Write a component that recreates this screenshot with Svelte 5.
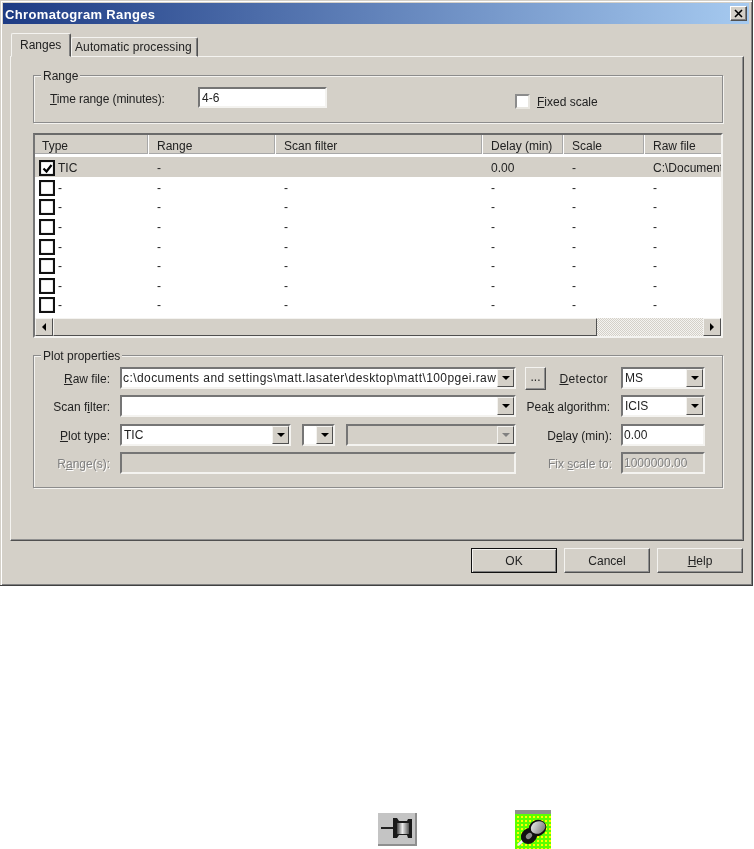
<script>
  const columns = ["Type", "Range", "Scan filter", "Delay (min)", "Scale", "Raw file"];
  const rows = [
    { checked: true, cells: ["TIC", "-", "", "0.00", "-", "C:\\Documents and Settings"] },
    ...Array.from({ length: 7 }, () => ({ checked: false, cells: ["-", "-", "-", "-", "-", "-"] })),
  ];
</script>

{#snippet combo(text, cls = "", disabled = false)}
  <div class="combo {cls}" class:disabled>
    <span class="combo_text">{text}</span>
    <span class="drop"><i></i></span>
  </div>
{/snippet}

<div class="dialog">
  <div class="titlebar">
    <span>Chromatogram Ranges</span>
    <button class="close" aria-label="Close">
      <svg width="9" height="9" viewBox="0 0 9 9"><path d="M1 1l7 7M8 1L1 8" stroke="#000" stroke-width="1.6" /></svg>
    </button>
  </div>

  <div class="tabs">
    <div class="tab active">Ranges</div>
    <div class="tab">Automatic processing</div>
  </div>

  <div class="page">
    <div class="group range_group">
      <span class="legend">Range</span>
      <label class="time_label" for="time"><u>T</u>ime range (minutes):</label>
      <input id="time" class="field time_input" value="4-6" />
      <div class="fixed">
        <span class="small_check"></span>
        <span><u>F</u>ixed scale</span>
      </div>
    </div>

    <div class="table">
      <div class="row head">
        {#each columns as col}
          <div class="th">{col}</div>
        {/each}
      </div>
      <div class="body">
        {#each rows as row}
          <div class="row" class:selected={row.checked}>
            {#each row.cells as cell, i}
              <div class="td">
                {#if i === 0}
                  <span class="check">
                    {#if row.checked}
                      <svg width="11" height="11" viewBox="0 0 11 11"><path d="M1.500 5.500l3 3 5-6.500" fill="none" stroke="#000" stroke-width="2.2" /></svg>
                    {/if}
                  </span>
                {/if}
                {cell}
              </div>
            {/each}
          </div>
        {/each}
      </div>
      <div class="scrollbar">
        <span class="sb_btn"><i class="left"></i></span>
        <span class="thumb"></span>
        <span class="hatch"></span>
        <span class="sb_btn"><i class="right"></i></span>
      </div>
    </div>

    <div class="group plot_group">
      <span class="legend">Plot properties</span>
      <div class="plot_left">
        <span class="lbl"><u>R</u>aw file:</span>
        {@render combo("c:\\documents and settings\\matt.lasater\\desktop\\matt\\100pgei.raw", "path")}
        <span class="lbl">Scan f<u>i</u>lter:</span>
        {@render combo("")}
        <span class="lbl"><u>P</u>lot type:</span>
        <div class="type_row">
          {@render combo("TIC", "type_main")}
          {@render combo("", "type_small")}
          {@render combo("", "type_third", true)}
        </div>
        <span class="lbl off">R<u>a</u>nge(s):</span>
        <div class="field blank"></div>
      </div>
      <div class="plot_right">
        <div class="first_cell">
          <button class="dots">...</button>
          <span class="lbl detector"><u>D</u>etector</span>
        </div>
        {@render combo("MS")}
        <span class="lbl peak">Pea<u>k</u> algorithm:</span>
        {@render combo("ICIS")}
        <span class="lbl">D<u>e</u>lay (min):</span>
        <div class="field"><span class="combo_text">0.00</span></div>
        <span class="lbl off">Fix <u>s</u>cale to:</span>
        <div class="field blank"><span class="combo_text off_text">1000000.00</span></div>
      </div>
    </div>
  </div>

  <div class="buttons">
    <button class="btn default">OK</button>
    <button class="btn">Cancel</button>
    <button class="btn"><u>H</u>elp</button>
  </div>
</div>

<div class="icons">
  <div class="pin_icon">
    <svg width="39" height="33" viewBox="0 0 39 33">
      <defs>
        <linearGradient id="barrel" x1="0" y1="0" x2="1" y2="0">
          <stop offset="0" stop-color="#444" />
          <stop offset="0.45" stop-color="#eee" />
          <stop offset="1" stop-color="#555" />
        </linearGradient>
      </defs>
      <rect x="3" y="14" width="13" height="2" fill="#222" />
      <path d="M15 5h4l2 3h8l1-2h4v19h-4l-1-3h-8l-2 3h-4z" fill="#1a1a1a" />
      <path d="M19 10h12v11H19z" fill="url(#barrel)" />
    </svg>
  </div>
  <div class="green_icon">
    <svg width="36" height="39" viewBox="0 0 36 39">
      <defs>
        <pattern id="chk" width="4" height="4" patternUnits="userSpaceOnUse">
          <rect width="4" height="4" fill="#5cff00" />
          <rect x="2" y="2" width="2" height="2" fill="#ffff00" />
        </pattern>
        <linearGradient id="head" x1="0" y1="0" x2="1" y2="1">
          <stop offset="0" stop-color="#f2f2f2" />
          <stop offset="1" stop-color="#6f6f6f" />
        </linearGradient>
      </defs>
      <rect width="36" height="39" fill="url(#chk)" />
      <rect width="36" height="4" fill="#8f8f8f" />
      <path d="M3 35l9-8" stroke="#f0f0f0" stroke-width="2.5" />
      <ellipse cx="14" cy="26" rx="8.500" ry="7.500" transform="rotate(-40 14 26)" fill="#111" />
      <ellipse cx="22.500" cy="18" rx="9" ry="8" transform="rotate(-25 22.500 18)" fill="#111" />
      <ellipse cx="23" cy="17.500" rx="7.500" ry="6" transform="rotate(-25 23 17.500)" fill="url(#head)" />
      <ellipse cx="14" cy="26" rx="3.500" ry="2.500" transform="rotate(-40 14 26)" fill="#8a8a8a" />
    </svg>
  </div>
</div>

<style>
  :global(body) {
    background: #fff;
    overflow: hidden;
  }

  * {
    box-sizing: border-box;
  }

  .dialog {
    width: 753px;
    height: 586px;
    padding: 3px;
    background: #d4d0c8;
    border-right: 1px solid #404040;
    border-bottom: 1px solid #404040;
    box-shadow: inset 1px 1px 0 #d4d0c8, inset 2px 2px 0 #fff, inset -1px -1px 0 #808080;
    font: 12px "Liberation Sans", Arial, sans-serif;
    color: #222;
    filter: blur(0.3px);
  }

  .titlebar {
    display: flex;
    align-items: center;
    justify-content: space-between;
    height: 21px;
    padding: 1px 2px 0 2px;
    background: linear-gradient(90deg, #1d3b84, #a6caf0);
    color: #fff;
    font-weight: bold;
    font-size: 13px;
    letter-spacing: 0.35px;
  }

  .close {
    width: 17px;
    height: 15px;
    padding: 0;
    margin-top: -1px;
    display: flex;
    align-items: center;
    justify-content: center;
    background: #d4d0c8;
    border: 1px solid;
    border-color: #fff #505050 #505050 #fff;
    box-shadow: inset -1px -1px 0 #808080;
  }

  .tabs {
    display: flex;
    align-items: flex-end;
    height: 33px;
    padding: 9px 0 0 8px;
    margin-bottom: -1px;
    position: relative;
    z-index: 1;
  }

  .tab {
    height: 20px;
    padding: 2px 0 0 3px;
    width: 127px;
    background: #d4d0c8;
    border: 1px solid;
    border-color: #f4f3f0 #505050 #d4d0c8 #f4f3f0;
    border-bottom: 1px solid #f4f3f0;
    border-radius: 2px 2px 0 0;
    box-shadow: inset -1px 0 0 #808080;
    letter-spacing: 0.1px;
  }

  .tab.active {
    height: 24px;
    width: 60px;
    padding: 4px 0 0 8px;
    border-bottom-color: #d4d0c8;
    letter-spacing: 0;
  }

  .page {
    margin-left: 7px;
    width: 734px;
    height: 485px;
    padding: 18px 0 0 22px;
    border: 1px solid;
    border-color: #f4f3f0 #505050 #505050 #f4f3f0;
    box-shadow: inset -1px -1px 0 #909090;
  }

  .group {
    position: relative;
    width: 690px;
    border: 1px solid #8c8c8c;
    box-shadow: 1px 1px 0 #f4f3f0, inset 1px 1px 0 #f4f3f0;
  }

  .legend {
    position: absolute;
    top: -7px;
    left: 7px;
    padding: 0 2px;
    background: #d4d0c8;
    line-height: 14px;
  }

  .range_group {
    display: flex;
    align-items: flex-start;
    height: 48px;
    padding: 11px 0 0 16px;
  }

  .time_label {
    width: 148px;
    line-height: 24px;
    letter-spacing: -0.1px;
  }

  .field {
    display: flex;
    align-items: center;
    height: 21px;
    background: #fff;
    border: 2px solid;
    border-color: #757575 #f4f3f0 #f4f3f0 #757575;
    outline: none;
    font: inherit;
    color: inherit;
    min-width: 0;
  }

  .field .combo_text {
    padding-left: 1px;
  }

  .time_input {
    width: 129px;
    padding: 0 2px;
  }

  .fixed {
    display: flex;
    align-items: center;
    gap: 7px;
    margin: 7px 0 0 188px;
  }

  .small_check {
    width: 15px;
    height: 15px;
    background: #fff;
    border: 2px solid;
    border-color: #8c8c8c #e8e6e0 #e8e6e0 #8c8c8c;
  }

  .table {
    width: 690px;
    height: 205px;
    margin-top: 10px;
    background: #fff;
    border: 2px solid;
    border-color: #6a6a6a #f4f3f0 #f4f3f0 #757575;
    overflow: hidden;
  }

  .row {
    display: grid;
    grid-template-columns: 114px 127px 207px 81px 81px 1fr;
    height: 19.6px;
  }

  .row > div {
    overflow: hidden;
    white-space: nowrap;
  }

  .head {
    height: 20px;
    background: #d4d0c8;
  }

  .th {
    padding: 4px 0 0 7px;
    border-right: 1px solid #fff;
    border-bottom: 1px solid #fff;
    box-shadow: inset -1px -1px 0 #a8a8a8;
  }

  .th:not(:first-child) {
    padding-left: 8px;
  }

  .th:last-child {
    border-right: none;
    box-shadow: inset 0 -1px 0 #a8a8a8;
  }

  .body {
    height: 163px;
    padding-top: 2px;
  }

  .td {
    display: flex;
    align-items: center;
    padding: 3px 0 0 8px;
  }

  .td:first-child {
    padding-left: 4px;
    gap: 3px;
  }

  .selected {
    background: #d4d0c8;
  }

  .check {
    display: flex;
    flex: none;
    align-items: center;
    justify-content: center;
    width: 16px;
    height: 16px;
    background: #fff;
    border: 2px solid #111;
    box-shadow: inset 0 0 1px #333;
  }

  .scrollbar {
    display: flex;
    height: 18px;
    background: #d4d0c8;
  }

  .sb_btn {
    display: flex;
    align-items: center;
    justify-content: center;
    width: 18px;
    background: #d4d0c8;
    border: 1px solid;
    border-color: #f4f3f0 #505050 #505050 #f4f3f0;
  }

  .left,
  .right {
    width: 0;
    height: 0;
    border-top: 4px solid transparent;
    border-bottom: 4px solid transparent;
  }

  .left {
    border-right: 4px solid #000;
  }

  .right {
    border-left: 4px solid #000;
  }

  .thumb {
    width: 544px;
    border: 1px solid;
    border-color: #f4f3f0 #505050 #505050 #f4f3f0;
  }

  .hatch {
    flex: 1;
    background: repeating-conic-gradient(#d4d0c8 0 25%, #f4f3f0 0 50%) 0 0 / 2px 2px;
  }

  .plot_group {
    display: flex;
    gap: 9px;
    height: 133px;
    margin-top: 17px;
    padding: 11px 0 0 18px;
  }

  .plot_left {
    display: grid;
    grid-template-columns: 58px 396px;
    grid-auto-rows: 22px;
    column-gap: 10px;
    row-gap: 6.33px;
    align-items: center;
  }

  .plot_right {
    display: grid;
    grid-template-columns: 87px 84px;
    grid-auto-rows: 22px;
    column-gap: 9px;
    row-gap: 6.33px;
    align-items: center;
  }

  .plot_left .combo,
  .plot_left .field,
  .plot_right .combo,
  .plot_right .field {
    height: 22px;
  }

  .lbl {
    text-align: right;
    white-space: nowrap;
    direction: rtl;
    unicode-bidi: plaintext;
    padding-top: 2px;
  }

  .detector {
    letter-spacing: 0.4px;
  }

  .peak {
    padding-right: 2px;
  }

  .off,
  .off_text {
    color: #808080;
    text-shadow: 1px 1px 0 #fff;
  }

  .blank {
    background: #d4d0c8;
  }

  .first_cell {
    display: flex;
    align-items: center;
    justify-content: space-between;
    height: 22px;
    padding-right: 4px;
  }

  .dots {
    width: 21px;
    height: 23px;
    padding: 0 0 2px;
    background: #d4d0c8;
    border: 1px solid;
    border-color: #f4f3f0 #505050 #505050 #f4f3f0;
    box-shadow: inset -1px -1px 0 #909090;
    font: inherit;
    color: inherit;
    line-height: 1;
  }

  .combo {
    display: flex;
    align-items: center;
    justify-content: space-between;
    height: 21px;
    background: #fff;
    border: 2px solid;
    border-color: #757575 #f4f3f0 #f4f3f0 #757575;
    min-width: 0;
  }

  .combo.disabled {
    background: #d4d0c8;
  }

  .combo_text {
    padding-left: 2px;
    white-space: nowrap;
    overflow: hidden;
  }

  .path .combo_text {
    padding-left: 1px;
    letter-spacing: 0.43px;
  }

  .drop {
    display: flex;
    flex: none;
    align-items: center;
    justify-content: center;
    width: 17px;
    height: 18px;
    background: #d4d0c8;
    border: 1px solid;
    border-color: #f4f3f0 #505050 #505050 #f4f3f0;
  }

  .drop i {
    width: 0;
    height: 0;
    border-left: 4px solid transparent;
    border-right: 4px solid transparent;
    border-top: 4px solid #000;
  }

  .disabled .drop i {
    border-top-color: #808080;
  }

  .type_row {
    display: flex;
    gap: 11px;
  }

  .type_main {
    width: 171px;
  }

  .type_small {
    width: 33px;
  }

  .type_third {
    flex: 1;
  }

  .buttons {
    display: flex;
    justify-content: flex-end;
    gap: 7px;
    width: 740px;
    margin-top: 7px;
  }

  .btn {
    width: 86px;
    height: 25px;
    padding: 0;
    background: #d4d0c8;
    border: 1px solid;
    border-color: #f4f3f0 #505050 #505050 #f4f3f0;
    box-shadow: inset -1px -1px 0 #909090;
    font: inherit;
    color: inherit;
  }

  .btn.default {
    border-color: #111;
    box-shadow: inset 1px 1px 0 #f4f3f0, inset -1px -1px 0 #808080;
  }

  .icons {
    display: flex;
    align-items: flex-start;
    gap: 98px;
    padding: 224px 0 0 378px;
  }

  .pin_icon {
    width: 39px;
    height: 33px;
    margin-top: 3px;
    background: #c4c4c4;
    box-shadow: inset -2px -2px 0 #8f8f8f;
  }

  .pin_icon svg,
  .green_icon svg {
    display: block;
    filter: blur(0.5px);
  }

  .green_icon {
    width: 36px;
    height: 39px;
    overflow: hidden;
  }
</style>
